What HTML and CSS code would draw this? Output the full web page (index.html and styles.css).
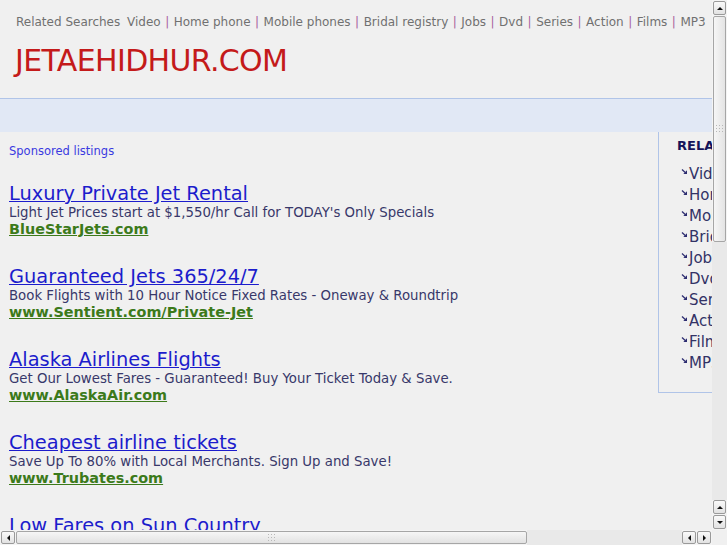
FILE: index.html
```html
<!DOCTYPE html>
<html>
<head>
<meta charset="utf-8">
<link rel="stylesheet" href="styles.css">
</head>
<body>
<div class="page">
  <div class="topnav">
    <span class="rs">Related Searches</span>
    <a>Video</a><span class="sep">|</span><a>Home phone</a><span class="sep">|</span><a>Mobile phones</a><span class="sep">|</span><a>Bridal registry</a><span class="sep">|</span><a>Jobs</a><span class="sep">|</span><a>Dvd</a><span class="sep">|</span><a>Series</a><span class="sep">|</span><a>Action</a><span class="sep">|</span><a>Films</a><span class="sep">|</span><a>MP3</a>
  </div>
  <div class="logo">JETAEHIDHUR.COM</div>
  <div class="band"></div>
  <div class="main">
    <div class="left">
      <div class="sponsored">Sponsored listings</div>
      <div class="ad">
        <a class="title">Luxury Private Jet Rental</a>
        <div class="desc">Light Jet Prices start at $1,550/hr Call for TODAY's Only Specials</div>
        <a class="url">BlueStarJets.com</a>
      </div>
      <div class="ad">
        <a class="title">Guaranteed Jets 365/24/7</a>
        <div class="desc">Book Flights with 10 Hour Notice Fixed Rates - Oneway &amp; Roundtrip</div>
        <a class="url">www.Sentient.com/Private-Jet</a>
      </div>
      <div class="ad">
        <a class="title">Alaska Airlines Flights</a>
        <div class="desc">Get Our Lowest Fares - Guaranteed! Buy Your Ticket Today &amp; Save.</div>
        <a class="url">www.AlaskaAir.com</a>
      </div>
      <div class="ad">
        <a class="title">Cheapest airline tickets</a>
        <div class="desc">Save Up To 80% with Local Merchants. Sign Up and Save!</div>
        <a class="url">www.Trubates.com</a>
      </div>
      <div class="ad">
        <a class="title">Low Fares on Sun Country</a>
        <div class="desc">Book Low Fares on Sun Country Airlines Today</div>
        <a class="url">www.SunCountry.com</a>
      </div>
    </div>
    <div class="right">
      <div class="rhead">RELATED SEARCHES</div>
      <ul class="rlist">
        <li><svg class="arr" viewBox="0 0 7 7"><path d="M1 1.5 L4.2 4.5" stroke="#2c2c70" stroke-width="1.2" fill="none"/><path d="M6 2.3 L6 6 L2.3 6 Z" fill="#2c2c70"/></svg><a>Video</a></li>
        <li><svg class="arr" viewBox="0 0 7 7"><path d="M1 1.5 L4.2 4.5" stroke="#2c2c70" stroke-width="1.2" fill="none"/><path d="M6 2.3 L6 6 L2.3 6 Z" fill="#2c2c70"/></svg><a>Home phone</a></li>
        <li><svg class="arr" viewBox="0 0 7 7"><path d="M1 1.5 L4.2 4.5" stroke="#2c2c70" stroke-width="1.2" fill="none"/><path d="M6 2.3 L6 6 L2.3 6 Z" fill="#2c2c70"/></svg><a>Mobile phones</a></li>
        <li><svg class="arr" viewBox="0 0 7 7"><path d="M1 1.5 L4.2 4.5" stroke="#2c2c70" stroke-width="1.2" fill="none"/><path d="M6 2.3 L6 6 L2.3 6 Z" fill="#2c2c70"/></svg><a>Bridal registry</a></li>
        <li><svg class="arr" viewBox="0 0 7 7"><path d="M1 1.5 L4.2 4.5" stroke="#2c2c70" stroke-width="1.2" fill="none"/><path d="M6 2.3 L6 6 L2.3 6 Z" fill="#2c2c70"/></svg><a>Jobs</a></li>
        <li><svg class="arr" viewBox="0 0 7 7"><path d="M1 1.5 L4.2 4.5" stroke="#2c2c70" stroke-width="1.2" fill="none"/><path d="M6 2.3 L6 6 L2.3 6 Z" fill="#2c2c70"/></svg><a>Dvd</a></li>
        <li><svg class="arr" viewBox="0 0 7 7"><path d="M1 1.5 L4.2 4.5" stroke="#2c2c70" stroke-width="1.2" fill="none"/><path d="M6 2.3 L6 6 L2.3 6 Z" fill="#2c2c70"/></svg><a>Series</a></li>
        <li><svg class="arr" viewBox="0 0 7 7"><path d="M1 1.5 L4.2 4.5" stroke="#2c2c70" stroke-width="1.2" fill="none"/><path d="M6 2.3 L6 6 L2.3 6 Z" fill="#2c2c70"/></svg><a>Action</a></li>
        <li><svg class="arr" viewBox="0 0 7 7"><path d="M1 1.5 L4.2 4.5" stroke="#2c2c70" stroke-width="1.2" fill="none"/><path d="M6 2.3 L6 6 L2.3 6 Z" fill="#2c2c70"/></svg><a>Films</a></li>
        <li><svg class="arr" viewBox="0 0 7 7"><path d="M1 1.5 L4.2 4.5" stroke="#2c2c70" stroke-width="1.2" fill="none"/><path d="M6 2.3 L6 6 L2.3 6 Z" fill="#2c2c70"/></svg><a>MP3</a></li>
      </ul>
    </div>
  </div>
</div>

<div class="vscroll">
  <div class="sbtn up"><span class="tri tri-up"></span></div>
  <div class="vthumb"><span class="grip"></span></div>
  <div class="vtrack"></div>
  <div class="sbtn up"><span class="tri tri-up"></span></div>
  <div class="sbtn dn"><span class="tri tri-dn"></span></div>
</div>
<div class="hscroll">
  <div class="hbtn"><span class="tri tri-lt"></span></div>
  <div class="hthumb"><span class="grip"></span></div>
  <div class="htrack"></div>
  <div class="hbtn"><span class="tri tri-lt"></span></div>
  <div class="hbtn"><span class="tri tri-rt"></span></div>
</div>
<div class="corner"></div>
</body>
</html>
```

FILE: styles.css
```css
html, body {
  margin: 0;
  padding: 0;
  overflow: hidden;
  background: #f0f0f0;
  font-family: "DejaVu Sans", sans-serif;
}
.page {
  width: 900px;
}
.topnav {
  padding: 14px 0 0 16px;
  height: 28px;
  font-size: 12px;
  color: #707070;
  line-height: 16px;
  white-space: nowrap;
}
.topnav .rs { margin-right: 3px; }
.topnav .sep {
  color: #a8609e;
  margin: 0 4.5px;
}
.logo {
  padding-left: 15px;
  font-size: 30px;
  letter-spacing: -0.65px;
  color: #c41a1a;
  height: 56px;
  line-height: 38px;
}
.band {
  height: 33px;
  border-top: 1px solid #b0c4e8;
  background: #e1e8f5;
}
.main {
  display: flex;
  align-items: flex-start;
}
.left {
  width: 649px;
  padding: 11px 0 0 9px;
}
.sponsored {
  font-size: 11.5px;
  color: #3a3ae0;
  line-height: 16px;
  margin-bottom: 25px;
}
.ad {
  margin-bottom: 29px;
}
.ad .title {
  display: block;
  font-size: 19.4px;
  color: #1c1ccc;
  text-decoration: underline;
  line-height: 20px;
}
.ad .desc {
  font-size: 13.3px;
  color: #38386a;
  line-height: 17px;
}
.ad .url {
  display: block;
  font-size: 14.4px;
  font-weight: bold;
  color: #3c7a1a;
  text-decoration: underline;
  line-height: 17px;
}
.right {
  width: 220px;
  border-left: 1px solid #b0c4e8;
  border-bottom: 1px solid #b0c4e8;
  padding: 6px 0 19px 18px;
}
.rhead {
  font-size: 13px;
  font-weight: bold;
  color: #14145a;
  line-height: 16px;
  margin-bottom: 9px;
}
.rlist {
  list-style: none;
  margin: 0;
  padding: 0 0 0 4px;
}
.rlist li {
  display: flex;
  align-items: center;
  height: 21px;
  font-size: 15px;
  color: #333366;
}
.rlist .arr {
  width: 7px;
  height: 7px;
  margin-right: 1px;
  margin-top: -4px;
}

/* fake GTK scrollbars (overlay) */
.vscroll {
  position: fixed;
  right: 0;
  top: 0;
  width: 15px;
  height: 530px;
  display: flex;
  flex-direction: column;
  background: #f4f4f4;
}
.sbtn {
  height: 12px;
  margin: 0 1px 1px 1px;
  border: 1px solid #9a9a9a;
  border-radius: 2px;
  background: linear-gradient(#fafafa, #e2e2e2);
  display: flex;
  align-items: center;
  justify-content: center;
}
.vscroll .sbtn:first-child { margin-top: 1px; }
.vthumb {
  height: 224px;
  margin: 0 1px;
  border: 1px solid #a6a6a6;
  border-radius: 2px;
  background: linear-gradient(90deg, #f6f6f6, #e4e4e4);
  display: flex;
  align-items: center;
  justify-content: center;
}
.vtrack {
  flex: 1;
  background-image: radial-gradient(#dcdcdc 0.6px, transparent 0.8px);
  background-size: 2px 2px;
}
.grip {
  width: 10px;
  height: 10px;
  background-image: radial-gradient(#b8b8b8 0.7px, transparent 0.9px);
  background-size: 3px 3px;
}
.hscroll {
  position: fixed;
  left: 0;
  bottom: 0;
  width: 712px;
  height: 15px;
  display: flex;
  background: #f4f4f4;
}
.hbtn {
  width: 12px;
  margin: 1px 1px 1px 0;
  border: 1px solid #9a9a9a;
  border-radius: 2px;
  background: linear-gradient(#fafafa, #e2e2e2);
  display: flex;
  align-items: center;
  justify-content: center;
}
.hscroll .hbtn:first-child { margin-left: 1px; }
.hthumb {
  width: 509px;
  margin: 1px 0;
  border: 1px solid #a6a6a6;
  border-radius: 2px;
  background: linear-gradient(#f6f6f6, #e2e2e2);
  display: flex;
  align-items: center;
  justify-content: center;
}
.htrack {
  flex: 1;
  background-image: radial-gradient(#dcdcdc 0.6px, transparent 0.8px);
  background-size: 2px 2px;
}
.corner {
  position: fixed;
  right: 0;
  bottom: 0;
  width: 15px;
  height: 15px;
  background: #f0f0f0;
}
.tri { width: 0; height: 0; display: block; }
.tri-up { border-left: 3px solid transparent; border-right: 3px solid transparent; border-bottom: 3px solid #111; }
.tri-dn { border-left: 3px solid transparent; border-right: 3px solid transparent; border-top: 3px solid #111; }
.tri-lt { border-top: 3px solid transparent; border-bottom: 3px solid transparent; border-right: 3px solid #111; }
.tri-rt { border-top: 3px solid transparent; border-bottom: 3px solid transparent; border-left: 3px solid #111; }
```
